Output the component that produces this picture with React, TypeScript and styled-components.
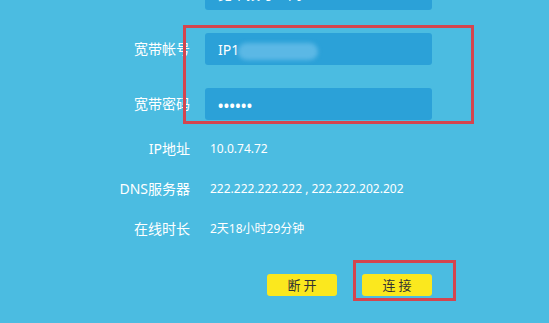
import React from "react";
import styled, { createGlobalStyle } from "styled-components";

const GlobalStyle = createGlobalStyle`
  html, body {
    margin: 0;
    padding: 0;
    background: #4bbce1;
    overflow: hidden;
  }
  body {
    font-family: "Noto Sans", "Noto Sans CJK SC", sans-serif;
    color: #ffffff;
  }
`;

const Page = styled.div`
  position: relative;
  width: 549px;
  height: 323px;
  overflow: hidden;
`;

const Form = styled.div`
  position: relative;
  display: flex;
  flex-direction: column;
  margin-top: -22px;
`;

const InputRow = styled.div<{ $gap?: number }>`
  display: flex;
  align-items: center;
  gap: 15px;
  height: 32px;
  margin-top: ${(p) => p.$gap ?? 0}px;
`;

const InfoRow = styled.div<{ $gap?: number }>`
  display: flex;
  align-items: center;
  gap: 20px;
  height: 40px;
  margin-top: ${(p) => p.$gap ?? 0}px;
`;

const Label = styled.div`
  width: 190px;
  text-align: right;
  font-size: 14px;
  line-height: 20px;
  white-space: nowrap;
`;

const Field = styled.div<{ $lift?: number }>`
  position: relative;
  width: 227px;
  height: 32px;
  box-sizing: border-box;
  padding: 0 13px ${(p) => p.$lift ?? 0}px;
  display: flex;
  align-items: center;
  background: #2ba1d8;
  border-radius: 3px;
  font-size: 14px;
  white-space: nowrap;
  overflow: hidden;
`;

const Dots = styled.span`
  font-size: 14px;
  font-weight: 700;
  letter-spacing: 0.5px;
  padding-top: 2px;
`;

const Blur = styled.div`
  position: absolute;
  left: 33px;
  top: 10px;
  width: 80px;
  height: 17px;
  border-radius: 9px;
  background: rgba(100, 188, 232, 0.85);
  filter: blur(2px);
`;

const Value = styled.div`
  font-size: 12px;
  line-height: 18px;
  white-space: nowrap;
`;

const ButtonRow = styled.div`
  display: flex;
  justify-content: flex-end;
  gap: 25px;
  width: 227px;
  margin-left: 205px;
  margin-top: 25px;
`;

const Button = styled.button`
  width: 70px;
  height: 22px;
  border: none;
  border-radius: 3px;
  background: #fbe81e;
  color: #333333;
  font-family: "Noto Sans CJK SC", sans-serif;
  font-size: 13px;
  line-height: 22px;
  padding: 0;
  cursor: pointer;
`;

const Highlight = styled.div<{ $x: number; $y: number; $w: number; $h: number }>`
  position: absolute;
  left: ${(p) => p.$x}px;
  top: ${(p) => p.$y}px;
  width: ${(p) => p.$w}px;
  height: ${(p) => p.$h}px;
  box-sizing: border-box;
  border: 3px solid #d4454f;
  pointer-events: none;
`;

export default function App() {
  return (
    <Page>
      <GlobalStyle />
      <Form>
        <InputRow>
          <Label />
          <Field $lift={3}>宽带拨号上网</Field>
        </InputRow>
        <InputRow $gap={23}>
          <Label>宽带帐号</Label>
          <Field>
            IP1
            <Blur />
          </Field>
        </InputRow>
        <InputRow $gap={23}>
          <Label>宽带密码</Label>
          <Field>
            <Dots>••••••</Dots>
          </Field>
        </InputRow>
        <InfoRow $gap={9}>
          <Label>IP地址</Label>
          <Value>10.0.74.72</Value>
        </InfoRow>
        <InfoRow>
          <Label>DNS服务器</Label>
          <Value>222.222.222.222 , 222.222.202.202</Value>
        </InfoRow>
        <InfoRow>
          <Label>在线时长</Label>
          <Value>2天18小时29分钟</Value>
        </InfoRow>
        <ButtonRow>
          <Button>断 开</Button>
          <Button>连 接</Button>
        </ButtonRow>
      </Form>
      <Highlight $x={183} $y={25} $w={291} $h={99} />
      <Highlight $x={353} $y={260} $w={103} $h={41} />
    </Page>
  );
}
